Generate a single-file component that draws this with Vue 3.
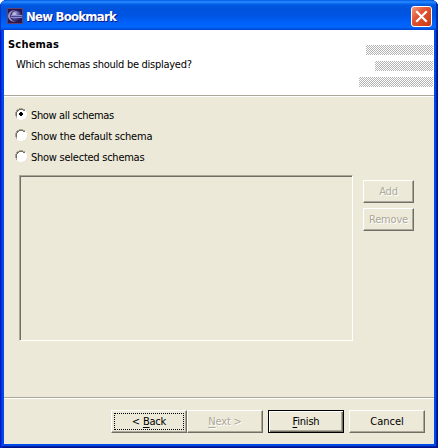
<script setup>
import { ref } from 'vue'

const options = [
  { id: 'all', label: 'Show all schemas', spacing: 'ls-a' },
  { id: 'default', label: 'Show the default schema', spacing: 'ls-b' },
  { id: 'selected', label: 'Show selected schemas', spacing: 'ls-c' },
]
const choice = ref('all')
</script>

<template>
  <div class="window">
    <header class="titlebar">
      <svg class="app-icon" width="16" height="16" viewBox="0 0 16 16">
        <defs>
          <radialGradient id="orb" cx="0.3" cy="0.3" r="0.75">
            <stop offset="0" stop-color="#d5d2f0" />
            <stop offset="0.4" stop-color="#7470b4" />
            <stop offset="1" stop-color="#241650" />
          </radialGradient>
        </defs>
        <rect width="16" height="16" fill="#64406c" />
        <rect x="1" y="1" width="14" height="14" fill="#2a1650" />
        <circle cx="6.8" cy="8" r="5.8" fill="#9a93c8" />
        <circle cx="9" cy="8" r="5.8" fill="#2a1c60" />
        <circle cx="9.4" cy="8" r="5.2" fill="url(#orb)" />
        <path d="M4 7.5H15M4 9.5H15" stroke="#8f8cd0" stroke-width="1" />
        <path d="M4 8.5H15" stroke="#4a448e" stroke-width="1" />
      </svg>
      <h1 class="title">New Bookmark</h1>
      <button class="close" aria-label="Close">
        <svg width="21" height="21" viewBox="0 0 21 21">
          <path d="M6 6L15 15M15 6L6 15" stroke="#fff" stroke-width="2.2" stroke-linecap="square" />
        </svg>
      </button>
    </header>
    <main class="content">
      <section class="banner">
        <div class="heading">
          <h2>Schemas</h2>
          <p>Which schemas should be displayed?</p>
        </div>
        <div class="stripes">
          <i class="s1"></i><i class="s2"></i><i class="s3"></i>
        </div>
      </section>
      <section class="body">
        <div class="radios">
          <div v-for="o in options" :key="o.id" class="radio" @click="choice = o.id">
            <svg width="12" height="12" viewBox="0 0 12 12" shape-rendering="crispEdges">
              <path d="M4 0H8V1H10V2H11V4H12V8H11V10H10V11H8V12H4V11H2V10H1V8H0V4H1V2H2V1H4Z" fill="#fff" />
              <path d="M4 0H8V1H10V2H8V1H4V2H2V4H1V8H2V10H1V8H0V4H1V2H2V1H4Z" fill="#aca899" />
              <path d="M4 1H8V2H10V3H8V2H4V3H3V4H2V8H1V4H2V2H4Z" fill="#716f64" />
              <path v-if="choice === o.id" d="M5 4H7V5H8V7H7V8H5V7H4V5H5Z" fill="#000" />
            </svg>
            <span :class="o.spacing">{{ o.label }}</span>
          </div>
        </div>
        <div class="chooser">
          <div class="list"></div>
          <div class="side">
            <button class="btn small" disabled>Add</button>
            <button class="btn small remove" disabled>Remove</button>
          </div>
        </div>
      </section>
      <footer class="actions">
        <button class="btn focused"><span>&lt; <u>B</u>ack</span></button>
        <button class="btn" disabled><span><u>N</u>ext &gt;</span></button>
        <button class="btn primary"><span><u>F</u>inish</span></button>
        <button class="btn cancel">Cancel</button>
      </footer>
    </main>
  </div>
</template>

<style>
body { margin: 0; background: #fff; }
</style>

<style scoped>
* { box-sizing: border-box; }
.window {
  width: 438px;
  height: 448px;
  padding: 0 4px 4px;
  border-radius: 7px 7px 0 0;
  overflow: hidden;
  font-family: "DejaVu Sans Condensed", "DejaVu Sans", sans-serif;
  font-stretch: condensed;
  font-size: 11px;
  color: #000;
  background: #0048e8;
  box-shadow: inset 1px 0 #0019cf, inset 2px 0 #0831d9, inset -1px 0 #00138c, inset -2px 0 #001ea0, inset 0 -1px #00138c, inset 0 -2px #001ea0;
}
.titlebar {
  display: flex;
  align-items: flex-start;
  height: 30px;
  margin: 0 -4px;
  padding: 6px 6px 0 7px;
  background: linear-gradient(#0058e8 0, #2a8cff 2px, #1475f5 3px, #0058e0 5px, #0053dc 9px, #0054e3 15px, #0061fa 23px, #0066ff 27px, #0053e0 29px, #003dcd 30px);
  box-shadow: inset 1px 0 #0035cc, inset -2px 0 #0029ad;
}
.app-icon { display: block; margin-top: 2px; }
.title {
  margin: 3px auto 0 3px;
  color: #fff;
  font-size: 13px;
  line-height: 16px;
  font-weight: bold;
  letter-spacing: -0.75px;
  white-space: nowrap;
  text-shadow: 1px 1px #0a1883;
}
.close {
  width: 21px;
  height: 21px;
  padding: 0;
  border: 1px solid #fff;
  border-radius: 3px;
  background: linear-gradient(135deg, #f09a80, #e25432 40%, #c83810);
}
.close svg { display: block; margin: -1px; }
.content { height: 414px; display: flex; flex-direction: column; background: #ece9d8; }
.banner {
  display: flex;
  justify-content: space-between;
  height: 67px;
  background: #fff;
  border-bottom: 1px solid #fff;
  box-shadow: inset 0 -1px #aca899;
}
.heading { padding: 8px 0 0 4px; }
h2 { margin: 0; font-size: 11px; line-height: 14px; letter-spacing: 0.2px; }
p { margin: 6px 0 0 8px; line-height: 14px; letter-spacing: -0.27px; white-space: nowrap; }
.stripes { display: flex; flex-direction: column; align-items: flex-end; gap: 6px; padding: 15px 1px 0 0; }
.stripes i {
  height: 10px;
  background: repeating-conic-gradient(#b4b4b4 0 25%, #fff 0 50%) 0 0 / 2px 2px;
}
.s1 { width: 67px; }
.s2 { width: 58px; }
.s3 { width: 74px; }
.body { flex: 1; padding: 7px 20px 0 11px; }
.radios { display: grid; grid-auto-rows: 21px; }
.radio { display: flex; align-items: center; gap: 4px; line-height: 14px; white-space: nowrap; }
.radio svg { flex: none; margin-top: -1px; }
.radio span { margin-top: 3px; }
.ls-a { letter-spacing: -0.35px; }
.ls-b { letter-spacing: -0.2px; }
.ls-c { letter-spacing: -0.25px; }
.chooser { display: flex; gap: 10px; margin: 8px 0 0 4px; }
.list {
  width: 334px;
  height: 166px;
  border: 1px solid;
  border-color: #aca899 #fff #fff #aca899;
  box-shadow: inset 1px 1px #716f64;
}
.side { display: flex; flex-direction: column; gap: 5px; padding-top: 5px; }
.btn {
  display: flex;
  align-items: center;
  justify-content: center;
  width: 76px;
  height: 23px;
  padding: 0 0 1px;
  border: 1px solid;
  border-color: #fff #716f64 #716f64 #fff;
  box-shadow: inset -1px -1px #aca899;
  background: #ece9d8;
  color: #000;
  font: inherit;
  letter-spacing: -0.2px;
  white-space: pre;
}
.btn:disabled { color: #aca899; text-shadow: 1px 1px #fff; }
.small { width: 51px; }
u { text-decoration: underline; text-underline-offset: 2px; text-decoration-thickness: 1px; }
.actions {
  display: flex;
  height: 47px;
  padding: 12px 0 0 107px;
  border-top: 1px solid #aca899;
  box-shadow: inset 0 1px #fff;
}
.focused span {
  display: flex;
  align-items: center;
  justify-content: center;
  width: 70px;
  height: 17px;
  border: 1px dotted #000;
  white-space: pre;
}
.primary { margin-left: 5px; border-color: #000; box-shadow: inset 1px 1px #fff, inset -1px -1px #716f64, inset -2px -2px #aca899; }
.cancel { margin-left: 5px; letter-spacing: 0; }
</style>
